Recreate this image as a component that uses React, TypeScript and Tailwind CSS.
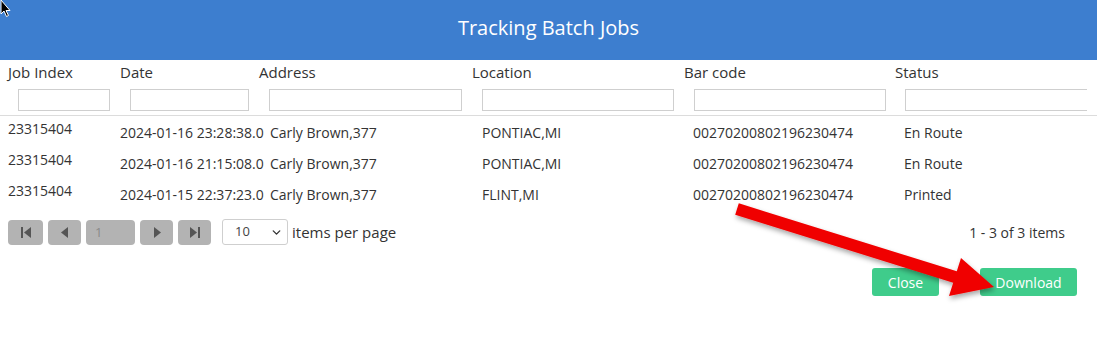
import { ChevronDown } from "lucide-react";

const columns = [
  { label: "Job Index", width: "w-[112px]", input: "w-[92px]", cell: "pl-[8px] pt-[3px]" },
  { label: "Date", width: "w-[139px]", input: "w-[119px]", cell: "pl-[8px] pt-[7px]" },
  { label: "Address", width: "w-[213px]", input: "w-[193px]", cell: "pl-[19px] pt-[7px]" },
  { label: "Location", width: "w-[212px]", input: "w-[192px]", cell: "pl-[18px] pt-[7px]" },
  { label: "Bar code", width: "w-[211px]", input: "w-[192px]", cell: "pl-[17px] pt-[7px]" },
  { label: "Status", width: "flex-1", input: "w-[182px] border-r-0", cell: "pl-[17px] pt-[7px]" },
];

const rows = [
  ["23315404", "2024-01-16 23:28:38.0", "Carly Brown,377", "PONTIAC,MI", "00270200802196230474", "En Route"],
  ["23315404", "2024-01-16 21:15:08.0", "Carly Brown,377", "PONTIAC,MI", "00270200802196230474", "En Route"],
  ["23315404", "2024-01-15 22:37:23.0", "Carly Brown,377", "FLINT,MI", "00270200802196230474", "Printed"],
];

const PagerButton = ({ w, children }: { w: string; children: React.ReactNode }) => (
  <button className={`${w} h-[25px] rounded-[4px] bg-[#b3b3b3] flex items-center justify-center`}>
    {children}
  </button>
);

export default function App() {
  return (
    <div className="relative w-[1097px] h-[345px] bg-white overflow-hidden text-[#333] font-['Open_Sans',sans-serif]">
      {/* Title bar */}
      <div className="h-[60px] bg-[#3d7ecf] flex items-center justify-center pb-[4px]">
        <h1 className="text-[20px] text-white">Tracking Batch Jobs</h1>
      </div>

      {/* Column headers + filters */}
      <div className="flex border-b border-[#dcdcdc] pb-[3px]">
        {columns.map((c) => (
          <div key={c.label} className={`${c.width} shrink-0 pl-[8px] overflow-hidden`}>
            <div className="text-[15px] leading-[20px] pt-[2px] whitespace-nowrap">{c.label}</div>
            <input
              className={`${c.input} ml-[10px] mt-[7px] h-[22px] border border-[#cfcfcf] bg-white outline-none`}
            />
          </div>
        ))}
      </div>

      {/* Rows */}
      <div>
        {rows.map((r, i) => (
          <div key={i} className="flex h-[31px] text-[14px] leading-[20px]">
            {r.map((v, j) => (
              <div key={j} className={`${columns[j].width} shrink-0 whitespace-nowrap ${columns[j].cell}`}>
                {v}
              </div>
            ))}
          </div>
        ))}
      </div>

      {/* Pager */}
      <div className="flex items-center mt-[10px] pl-[8px] pr-[32px] h-[26px]">
        <div className="flex items-center gap-[5px]">
          <PagerButton w="w-[35px]">
            <svg width="12" height="11" viewBox="0 0 12 11" fill="#555">
              <rect x="1" y="0" width="2" height="11" />
              <path d="M11 0 L4 5.5 L11 11 Z" />
            </svg>
          </PagerButton>
          <PagerButton w="w-[33px]">
            <svg width="8" height="11" viewBox="0 0 8 11" fill="#555">
              <path d="M7 0 L0 5.5 L7 11 Z" />
            </svg>
          </PagerButton>
          <div className="w-[49px] h-[25px] rounded-[4px] bg-[#b3b3b3] text-[#8a8a8a] text-[13px] leading-[25px] pl-[9px]">
            1
          </div>
          <PagerButton w="w-[33px]">
            <svg width="8" height="11" viewBox="0 0 8 11" fill="#555">
              <path d="M1 0 L8 5.5 L1 11 Z" />
            </svg>
          </PagerButton>
          <PagerButton w="w-[33px]">
            <svg width="12" height="11" viewBox="0 0 12 11" fill="#555">
              <path d="M1 0 L8 5.5 L1 11 Z" />
              <rect x="9" y="0" width="2" height="11" />
            </svg>
          </PagerButton>
        </div>
        <div className="ml-[11px] w-[66px] h-[26px] border border-[#cfcfcf] rounded-[3px] flex items-center justify-between pl-[12px] pr-[4px] text-[13px] text-[#444]">
          <span>10</span>
          <ChevronDown className="w-[13px] h-[13px] text-[#333]" strokeWidth={2.5} />
        </div>
        <span className="ml-[4px] text-[15px]">items per page</span>
        <span className="ml-auto text-[14px]">1 - 3 of 3 items</span>
      </div>

      {/* Actions */}
      <div className="flex justify-end gap-[41px] mt-[23px] pr-[20px]">
        <button className="w-[67px] h-[28px] rounded-[3px] bg-[#3fcc8b] text-white text-[14px]">
          Close
        </button>
        <button className="w-[97px] h-[28px] rounded-[3px] bg-[#3fcc8b] text-white text-[14px]">
          Download
        </button>
      </div>

      {/* Red annotation arrow */}
      <svg
        className="absolute left-0 top-0 pointer-events-none"
        width="1097"
        height="345"
        viewBox="0 0 1097 345"
      >
        <defs>
          <filter id="sh" x="-10%" y="-10%" width="120%" height="130%">
            <feDropShadow dx="1" dy="3" stdDeviation="2.5" floodColor="#000" floodOpacity="0.35" />
          </filter>
        </defs>
        <path
          filter="url(#sh)"
          fill="#f00000"
          d="M738.8 203.3 L956.8 271.3 L961 258 L994 287 L949 296 L953.2 282.7 L735.2 214.7 Z"
        />
      </svg>

      {/* Mouse cursor */}
      <svg className="absolute left-0 top-0" width="12" height="18" viewBox="0 0 12 18">
        <path d="M1 0 L1 14 L4 11 L6.5 16.5 L8.5 15.5 L6 10.5 L10 10.5 Z" fill="#000" stroke="#fff" strokeWidth="1" />
      </svg>
    </div>
  );
}
